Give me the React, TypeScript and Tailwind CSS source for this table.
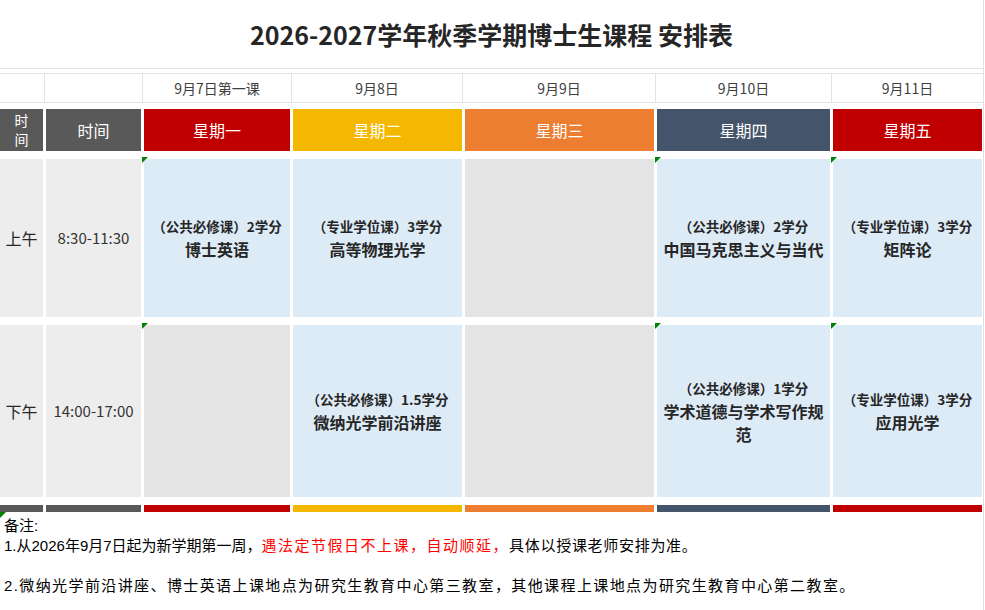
import React from 'react';

type Course = { label: string; name: string };
type Cell =
  | { kind: 'course'; course: Course; mark?: boolean }
  | { kind: 'empty'; mark?: boolean };

// header colours, one per column
const headerColors = [
  'bg-[#595959]',
  'bg-[#595959]',
  'bg-[#c00000]',
  'bg-[#f5b800]',
  'bg-[#ed7d31]',
  'bg-[#44546a]',
  'bg-[#c00000]',
];

const dates = ['', '', '9月7日第一课', '9月8日', '9月9日', '9月10日', '9月11日'];
const weekdays = ['星期一', '星期二', '星期三', '星期四', '星期五'];

const rows: { period: string; time: string; cells: Cell[] }[] = [
  {
    period: '上午',
    time: '8:30-11:30',
    cells: [
      { kind: 'course', mark: true, course: { label: '（公共必修课）2学分', name: '博士英语' } },
      { kind: 'course', course: { label: '（专业学位课）3学分', name: '高等物理光学' } },
      { kind: 'empty' },
      { kind: 'course', mark: true, course: { label: '（公共必修课）2学分', name: '中国马克思主义与当代' } },
      { kind: 'course', mark: true, course: { label: '（专业学位课）3学分', name: '矩阵论' } },
    ],
  },
  {
    period: '下午',
    time: '14:00-17:00',
    cells: [
      { kind: 'empty', mark: true },
      { kind: 'course', course: { label: '（公共必修课）1.5学分', name: '微纳光学前沿讲座' } },
      { kind: 'empty' },
      { kind: 'course', mark: true, course: { label: '（公共必修课）1学分', name: '学术道德与学术写作规范' } },
      { kind: 'course', mark: true, course: { label: '（专业学位课）3学分', name: '应用光学' } },
    ],
  },
];

const Mark = () => (
  <span className="absolute -top-[2px] -left-[2px] w-0 h-0 border-t-[6px] border-t-[#008000] border-r-[6px] border-r-transparent" />
);

const BodyCell = ({ cell }: { cell: Cell }) => {
  if (cell.kind === 'empty') {
    return <div className="relative bg-[#e4e4e4]">{cell.mark && <Mark />}</div>;
  }
  return (
    <div className="relative bg-[#ddebf7] flex flex-col items-center justify-center text-center px-1 text-[#262626] font-bold">
      {cell.mark && <Mark />}
      <div className="text-[13.5px] leading-[23px]">{cell.course.label}</div>
      <div className="text-[16px] leading-[23px]">{cell.course.name}</div>
    </div>
  );
};

export default function App() {
  return (
    <div
      className="w-[985px] h-[610px] overflow-hidden bg-white"
      style={{ fontFamily: '"Noto Sans CJK SC", "Noto Sans", sans-serif' }}
    >
      <div className="w-[984px] h-full border-r border-[#e1e1e1]">
        {/* title */}
        <div className="h-[69px] border-b border-[#e3e3e3] flex items-center justify-center">
          <h1 className="text-[25px] font-bold text-[#262626] leading-none">
            2026-2027学年秋季学期博士生课程 安排表
          </h1>
        </div>
        <div className="h-[5px] border-b border-[#e3e3e3]" />

        {/* date row */}
        <div className="h-[29px] border-b border-[#e3e3e3] grid grid-cols-[45px_98px_149px_171px_193px_176px_151px]">
          {dates.map((d, i) => (
            <div
              key={i}
              className={`flex items-center justify-center text-[14px] text-[#404040] ${
                i < dates.length - 1 ? 'border-r border-[#e3e3e3]' : ''
              }`}
            >
              {d}
            </div>
          ))}
        </div>

        {/* timetable */}
        <div className="pt-[6px] grid grid-cols-[43px_95px_146px_169px_189px_173px_149px] grid-rows-[42px_158px_172px_7px] gap-x-[3px] gap-y-[8px]">
          <div className={`${headerColors[0]} flex flex-col items-center justify-center text-white text-[14px] leading-[19px]`}>
            <span>时</span>
            <span>间</span>
          </div>
          <div className={`${headerColors[1]} flex items-center justify-center text-white text-[16px]`}>时间</div>
          {weekdays.map((w, i) => (
            <div key={w} className={`${headerColors[i + 2]} flex items-center justify-center text-white text-[16px]`}>
              {w}
            </div>
          ))}

          {rows.map((r) => (
            <React.Fragment key={r.period}>
              <div className="bg-[#ededed] flex items-center justify-center text-[16px] text-[#262626]">{r.period}</div>
              <div className="bg-[#ededed] flex items-center justify-center text-[15px] text-[#333333]">{r.time}</div>
              {r.cells.map((c, i) => (
                <BodyCell key={i} cell={c} />
              ))}
            </React.Fragment>
          ))}

          {headerColors.map((c, i) => (
            <div key={i} className={c} />
          ))}
        </div>

        {/* notes */}
        <div
          className="relative pt-[4px] pl-[4px] text-[15px] leading-[20px] text-black"
          style={{ fontFamily: '"Liberation Sans", "Noto Sans CJK SC", sans-serif' }}
        >
          <span className="absolute top-0 left-0 w-0 h-0 border-t-[6px] border-t-[#008000] border-r-[6px] border-r-transparent" />
          <div>备注:</div>
          <div className="whitespace-nowrap">
            1.从2026年9月7日起为新学期第一周，
            <span className="text-[#ff0000] tracking-[1.5px]">遇法定节假日不上课，自动顺延，</span>
            <span className="tracking-[0.7px]">具体以授课老师安排为准。</span>
          </div>
          <div className="h-[20px]" />
          <div className="whitespace-nowrap tracking-[1.4px]">
            2.微纳光学前沿讲座、博士英语上课地点为研究生教育中心第三教室，其他课程上课地点为研究生教育中心第二教室。
          </div>
        </div>
      </div>
    </div>
  );
}
